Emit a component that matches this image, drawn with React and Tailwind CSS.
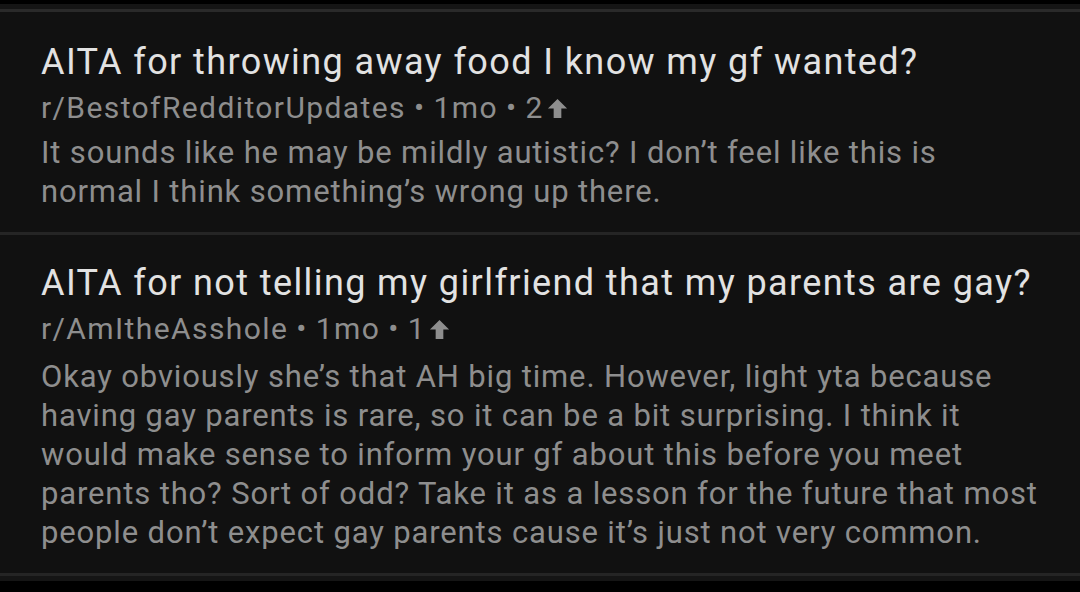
import React from "react";

const posts = [
  {
    title: "AITA for throwing away food I know my gf wanted?",
    sub: "r/BestofRedditorUpdates",
    age: "1mo",
    votes: 2,
    lines: [
      "It sounds like he may be mildly autistic? I don’t feel like this is",
      "normal I think something’s wrong up there.",
    ],
    pad: "pt-[28px] pb-[21px]",
    bodyMt: "mt-[5px]",
  },
  {
    title: "AITA for not telling my girlfriend that my parents are gay?",
    sub: "r/AmItheAsshole",
    age: "1mo",
    votes: 1,
    lines: [
      "Okay obviously she’s that AH big time. However, light yta because",
      "having gay parents is rare, so it can be a bit surprising. I think it",
      "would make sense to inform your gf about this before you meet",
      "parents tho? Sort of odd? Take it as a lesson for the future that most",
      "people don’t expect gay parents cause it’s just not very common.",
    ],
    pad: "pt-[26px] pb-[21px]",
    bodyMt: "mt-[8px]",
  },
];

const UpArrow = () => (
  <svg viewBox="0 0 24 24" className="w-[23px] h-[23px] ml-[2px] fill-[#8e8e8e]">
    <path d="M12 2 L22 12 H16 V22 H8 V12 H2 Z" />
  </svg>
);

const Comment = ({ post }) => (
  <div className={`pl-[41px] pr-[20px] border-b-[3px] border-[#252525] ${post.pad}`}>
    {/* post title */}
    <h2 className="text-[36px] leading-[44px] tracking-[1.4px] text-[#e2e2e2]">{post.title}</h2>
    <div className="mt-1 flex items-center text-[30px] leading-[40px] tracking-[1.4px] text-[#8e8e8e]">
      <span>{post.sub}</span>
      <span className="mx-[8px]">•</span>
      <span>{post.age}</span>
      <span className="mx-[8px]">•</span>
      <span>{post.votes}</span>
      <UpArrow />
    </div>
    <p className={`${post.bodyMt} text-[31px] leading-[39px] tracking-[0.85px] text-[#8e8e8e] whitespace-nowrap`}>
      {post.lines.map((l, i) => (
        <React.Fragment key={i}>
          {i > 0 && <br />}
          {l}
        </React.Fragment>
      ))}
    </p>
  </div>
);

export default function App() {
  return (
    <div className="w-[1080px] h-[592px] bg-black overflow-hidden" style={{ fontFamily: "Roboto, 'Noto Sans', sans-serif" }}>
      <div className="h-1" />
      <div className="h-[5px] bg-[#151515]" />
      <div className="h-[3px] bg-[#2a2a2a]" />
      <div className="bg-[#111111]">
        {posts.map((p) => (
          <Comment key={p.title} post={p} />
        ))}
      </div>
      <div className="h-[5px] bg-[#151515]" />
    </div>
  );
}
